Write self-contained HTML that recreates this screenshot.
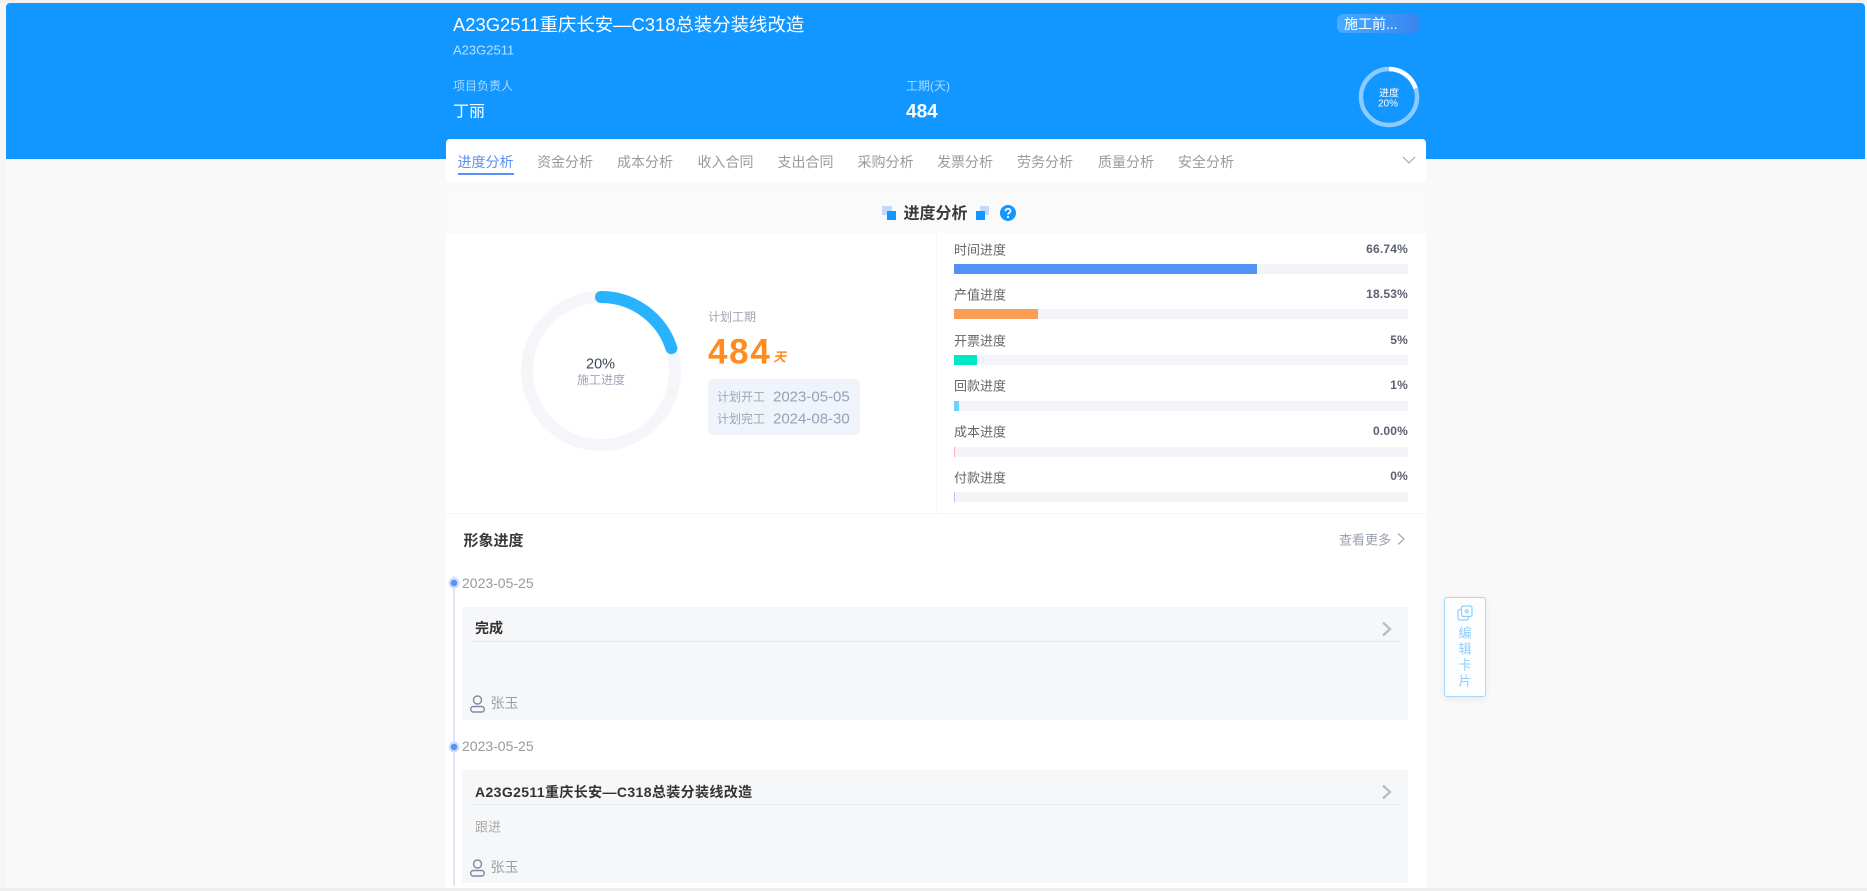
<!DOCTYPE html>
<html lang="zh">
<head>
<meta charset="utf-8">
<title>进度分析</title>
<style>
html,body{margin:0;padding:0;width:1867px;height:891px;overflow:hidden;background:#fff}
body{position:relative;font-family:"Liberation Sans","Noto Sans CJK SC",sans-serif;color:#333}
.a{position:absolute}
.t{position:absolute;white-space:nowrap;transform:translateY(-50%);line-height:1.3;filter:blur(.3px)}
.tab{font-size:14px;color:#9a9a9a}
.lb{font-size:13px;color:#666;left:954px}
.val{font-size:12px;font-weight:700;color:#5c6070;right:459px;letter-spacing:.2px}
.track{position:absolute;left:954px;width:454px;height:10px;background:#f3f4f8}
.track div{height:10px}
.pl{font-size:12px;color:#a0a4b6;left:717px}
.pd{font-size:15px;color:#9a9fb5;left:773px}
.date{font-size:14px;color:#9a9a9a;left:462px}
.card{position:absolute;left:462px;width:946px;height:113px;background:#f6f7f9}
.ct{font-size:14px;font-weight:700;color:#333;left:475px}
.hr{position:absolute;left:470px;width:930px;height:1px;background:#e8e9ee}
.nm{font-size:14px;color:#9a9fa8;left:490.5px}
.e{font-size:13px;color:#8fcffc;left:1458.5px}
</style>
</head>
<body>
<!-- page background -->
<div class="a" style="left:0;top:0;width:1867px;height:888px;background:#f9f9f9"></div>
<div class="a" style="left:0;top:888px;width:1867px;height:3px;background:#eeeeee"></div>
<div class="a" style="left:0;top:0;width:6px;height:888px;background:#f5f5f5"></div>
<div class="a" style="left:0;top:0;width:1867px;height:3px;background:#f2f2f2"></div>

<!-- blue header -->
<div class="a" style="left:6px;top:3px;width:1859px;height:156px;background:#1296ff;border-radius:4px 4px 0 0"></div>
<div class="t" style="left:453px;top:25px;font-size:18.4px;color:#fff">A23G2511重庆长安—C318总装分装线改造</div>
<div class="t" style="left:453px;top:51px;font-size:13px;color:rgba(255,255,255,.7)">A23G2511</div>
<div class="t" style="left:453px;top:87px;font-size:12px;color:rgba(255,255,255,.65)">项目负责人</div>
<div class="t" style="left:453px;top:113px;font-size:16px;color:#fff">丁丽</div>
<div class="t" style="left:906px;top:87px;font-size:12px;color:rgba(255,255,255,.65)">工期(天)</div>
<div class="t" style="left:906px;top:113px;font-size:19px;font-weight:700;color:#fff">484</div>
<div class="a" style="left:1337px;top:14px;width:82px;height:19px;border-radius:6px;background:linear-gradient(90deg,rgba(255,255,255,.22),#3a84ee)"></div>
<div class="t" style="left:1344px;top:23.5px;font-size:14px;color:#fff">施工前...</div>
<svg class="a" style="left:1357px;top:65px" width="64" height="64" viewBox="0 0 64 64">
<circle cx="32" cy="32" r="28" fill="none" stroke="#8ccbff" stroke-width="4.5"/>
<path d="M32 4A28 28 0 0 1 58.6 23.3" fill="none" stroke="#fff" stroke-width="4.5"/>
</svg>
<div class="t" style="left:1379px;top:93.5px;font-size:10px;color:#fff">进度</div>
<div class="t" style="left:1378px;top:104px;font-size:10px;color:#fff">20%</div>

<!-- tabs -->
<div class="a" style="left:446px;top:139px;width:980px;height:43px;background:#fff;border-radius:4px"></div>
<div class="t tab" style="left:457.5px;top:161.5px;color:#5b8ff9">进度分析</div>
<div class="a" style="left:457.5px;top:173px;width:56px;height:2px;background:#5b8ff9"></div>
<div class="t tab" style="left:537px;top:161.5px">资金分析</div>
<div class="t tab" style="left:617px;top:161.5px">成本分析</div>
<div class="t tab" style="left:697.5px;top:161.5px">收入合同</div>
<div class="t tab" style="left:777.5px;top:161.5px">支出合同</div>
<div class="t tab" style="left:857.5px;top:161.5px">采购分析</div>
<div class="t tab" style="left:937px;top:161.5px">发票分析</div>
<div class="t tab" style="left:1017px;top:161.5px">劳务分析</div>
<div class="t tab" style="left:1098px;top:161.5px">质量分析</div>
<div class="t tab" style="left:1178px;top:161.5px">安全分析</div>
<svg class="a" style="left:1402px;top:155px" width="14" height="10" viewBox="0 0 14 10"><path d="M1 2L7 8L13 2" fill="none" stroke="#a0a0a0" stroke-width="1"/></svg>

<!-- section title -->
<div class="a" style="left:446px;top:192px;width:980px;height:41px;background:#fafafa"></div>
<div class="a" style="left:882px;top:206px;width:10px;height:9px;background:#c5d8fc"></div>
<div class="a" style="left:887px;top:211px;width:9px;height:9px;background:#1296ff"></div>
<div class="t" style="left:903.5px;top:214.5px;font-size:16px;font-weight:700;color:#3a3a3a">进度分析</div>
<div class="a" style="left:980px;top:206px;width:9px;height:9px;background:#c5d8fc"></div>
<div class="a" style="left:976px;top:211px;width:9px;height:9px;background:#1296ff"></div>
<svg class="a" style="left:1000px;top:205px" width="16" height="16" viewBox="0 0 16 16">
<circle cx="8" cy="8" r="8" fill="#1296ff"/>
<path d="M5.4 6.2C5.4 4.7 6.5 3.8 8 3.8S10.6 4.7 10.6 6C10.6 7.6 8 7.8 8 9.6" fill="none" stroke="#fff" stroke-width="1.7"/>
<circle cx="8" cy="12" r="1.1" fill="#fff"/>
</svg>

<!-- main white panel -->
<div class="a" style="left:446px;top:233px;width:980px;height:655px;background:#fff"></div>
<div class="a" style="left:936px;top:233px;width:1px;height:280px;background:#f5f5f5"></div>
<div class="a" style="left:446px;top:513px;width:980px;height:1px;background:#f5f5f5"></div>

<!-- ring -->
<svg class="a" style="left:517px;top:287px" width="168" height="168" viewBox="0 0 168 168">
<circle cx="84" cy="84" r="74" fill="none" stroke="#f4f6fa" stroke-width="12"/>
<path d="M84 10A74 74 0 0 1 154.4 61.1" fill="none" stroke="#29b3ff" stroke-width="12" stroke-linecap="round"/>
</svg>
<div class="t" style="left:586px;top:364.5px;font-size:14.5px;color:#3f4756">20%</div>
<div class="t" style="left:577px;top:381px;font-size:12px;color:#a0a4b8">施工进度</div>

<div class="t" style="left:708px;top:318px;font-size:12px;color:#a0a4b6">计划工期</div>
<div class="t" style="left:708px;top:352px;font-size:35px;font-weight:700;color:#ff8c1f;letter-spacing:1.7px">484</div>
<div class="t" style="left:773px;top:358px;font-size:13px;font-weight:700;font-style:italic;color:#ff8c1f">天</div>
<div class="a" style="left:708px;top:379px;width:152px;height:56px;background:#eff4fb;border-radius:4px"></div>
<div class="t pl" style="top:397.5px">计划开工</div>
<div class="t pd" style="top:397px">2023-05-05</div>
<div class="t pl" style="top:419.5px">计划完工</div>
<div class="t pd" style="top:419px">2024-08-30</div>

<!-- bars -->
<div class="t lb" style="top:250.5px">时间进度</div><div class="t val" style="top:250px">66.74%</div>
<div class="track" style="top:264px"><div style="width:303px;background:#5193f4"></div></div>
<div class="t lb" style="top:296px">产值进度</div><div class="t val" style="top:295px">18.53%</div>
<div class="track" style="top:309px"><div style="width:84px;background:#f99d57"></div></div>
<div class="t lb" style="top:342px">开票进度</div><div class="t val" style="top:341px">5%</div>
<div class="track" style="top:355px"><div style="width:23px;background:#00e8c6"></div></div>
<div class="t lb" style="top:387px">回款进度</div><div class="t val" style="top:386px">1%</div>
<div class="track" style="top:401px"><div style="width:5px;background:#6fcfff"></div></div>
<div class="t lb" style="top:433px">成本进度</div><div class="t val" style="top:432px">0.00%</div>
<div class="track" style="top:447px"><div style="width:1px;background:#ffb3b8"></div></div>
<div class="t lb" style="top:478.5px">付款进度</div><div class="t val" style="top:477px">0%</div>
<div class="track" style="top:492px"><div style="width:1px;background:#c3c0f8"></div></div>

<!-- timeline -->
<div class="t" style="left:463.5px;top:540.5px;font-size:15px;font-weight:700;color:#3a3a3a">形象进度</div>
<div class="t" style="left:1339px;top:540.5px;font-size:13px;color:#9a9fb0">查看更多</div>
<svg class="a" style="left:1396px;top:532px" width="10" height="14" viewBox="0 0 10 14"><path d="M2 1.5L8 7L2 12.5" fill="none" stroke="#a5a8b8" stroke-width="1.2"/></svg>

<div class="a" style="left:453px;top:576px;width:2px;height:310px;background:#dde6f3"></div>
<svg class="a" style="left:448px;top:577px" width="12" height="12" viewBox="0 0 12 12"><circle cx="6" cy="6" r="5.5" fill="#cfe0fd"/><circle cx="6" cy="6" r="3.3" fill="#5b8ff9"/></svg>
<svg class="a" style="left:448px;top:741px" width="12" height="12" viewBox="0 0 12 12"><circle cx="6" cy="6" r="5.5" fill="#cfe0fd"/><circle cx="6" cy="6" r="3.3" fill="#5b8ff9"/></svg>

<div class="t date" style="top:583px">2023-05-25</div>
<div class="card" style="top:607px;height:112.5px"></div>
<div class="t ct" style="top:628px">完成</div>
<div class="hr" style="top:641px"></div>
<svg class="a" style="left:1380px;top:620px" width="13" height="18" viewBox="0 0 13 18"><path d="M3 2.5L10 9L3 15.5" fill="none" stroke="#bbbcc6" stroke-width="2.4"/></svg>
<svg class="a" style="left:469px;top:695px" width="17" height="18" viewBox="0 0 17 18"><circle cx="8.5" cy="5" r="4" fill="none" stroke="#7f88a3" stroke-width="1.4"/><rect x="1.7" y="11.5" width="13.6" height="5.5" rx="2.7" fill="none" stroke="#7f88a3" stroke-width="1.4"/></svg>
<div class="t nm" style="top:703px">张玉</div>

<div class="t date" style="top:746px">2023-05-25</div>
<div class="card" style="top:770px"></div>
<div class="t ct" style="top:791.5px;letter-spacing:.38px">A23G2511重庆长安—C318总装分装线改造</div>
<div class="hr" style="top:804px"></div>
<svg class="a" style="left:1380px;top:783px" width="13" height="18" viewBox="0 0 13 18"><path d="M3 2.5L10 9L3 15.5" fill="none" stroke="#bbbcc6" stroke-width="2.4"/></svg>
<div class="t" style="left:475px;top:827.5px;font-size:13px;color:#aaaaaa">跟进</div>
<svg class="a" style="left:469px;top:859px" width="17" height="18" viewBox="0 0 17 18"><circle cx="8.5" cy="5" r="4" fill="none" stroke="#7f88a3" stroke-width="1.4"/><rect x="1.7" y="11.5" width="13.6" height="5.5" rx="2.7" fill="none" stroke="#7f88a3" stroke-width="1.4"/></svg>
<div class="t nm" style="top:867px">张玉</div>

<!-- edit card -->
<div class="a" style="left:1444px;top:597px;width:40px;height:98px;background:#fbfdfe;border:1px solid #a6d8fb;border-radius:3px;box-shadow:0 2px 8px rgba(0,0,0,.07)"></div>
<svg class="a" style="left:1457px;top:605px" width="16" height="16" viewBox="0 0 16 16" fill="none" stroke="#8fcffc" stroke-width="1.2"><rect x="4.5" y="1" width="10.5" height="10.5" rx="2"/><path d="M4 4.5H3A2 2 0 0 0 1 6.5V13A2 2 0 0 0 3 15H9.5A2 2 0 0 0 11.5 13V12"/><circle cx="9.7" cy="6.2" r="1.5"/></svg>
<div class="t e" style="top:633.5px">编</div>
<div class="t e" style="top:649.5px">辑</div>
<div class="t e" style="top:665.5px">卡</div>
<div class="t e" style="top:682px">片</div>
</body>
</html>
